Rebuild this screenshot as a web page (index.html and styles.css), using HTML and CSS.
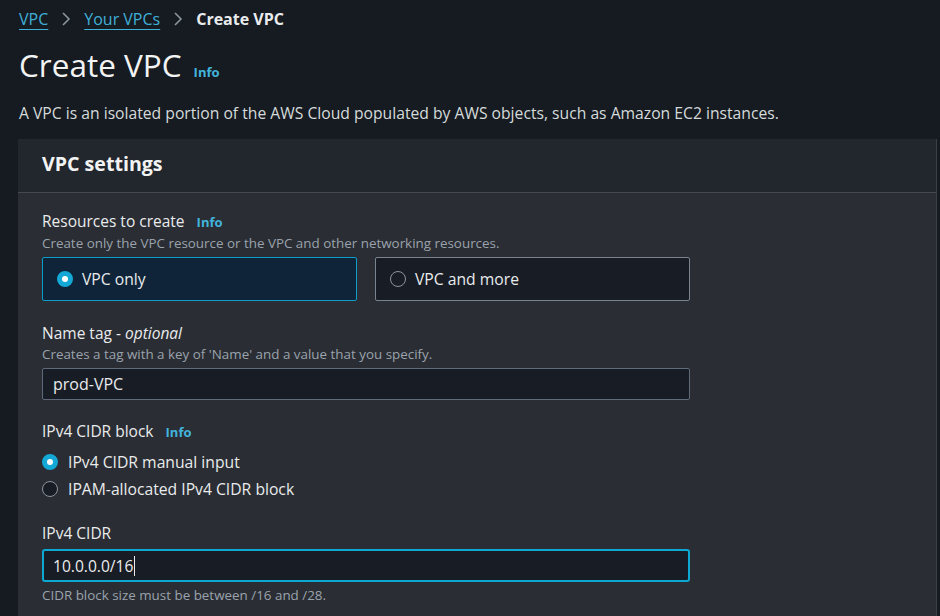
FILE: index.html
```html
<!DOCTYPE html>
<html>
<head>
<meta charset="utf-8">
<link rel="stylesheet" href="styles.css">
</head>
<body>
<div class="page">
  <nav class="crumbs">
    <a class="crumb-link">VPC</a>
    <svg class="chev" width="12" height="16" viewBox="0 0 12 16"><path d="M3 2 L9 8 L3 14" fill="none" stroke="#8d959e" stroke-width="1.6"/></svg>
    <a class="crumb-link">Your VPCs</a>
    <svg class="chev" width="12" height="16" viewBox="0 0 12 16"><path d="M3 2 L9 8 L3 14" fill="none" stroke="#8d959e" stroke-width="1.6"/></svg>
    <span class="crumb-current">Create VPC</span>
  </nav>
  <div class="title-row">
    <h1 class="title">Create VPC</h1>
    <span class="info">Info</span>
  </div>
  <p class="desc">A VPC is an isolated portion of the AWS Cloud populated by AWS objects, such as Amazon EC2 instances.</p>

  <section class="panel">
    <header class="panel-head">
      <h2 class="panel-title">VPC settings</h2>
    </header>
    <div class="panel-body">
      <div class="field">
        <div class="label">Resources to create <span class="info info-sm">Info</span></div>
        <div class="hint">Create only the VPC resource or the VPC and other networking resources.</div>
        <div class="tiles">
          <div class="tile tile-on"><span class="radio radio-on"></span><span>VPC only</span></div>
          <div class="tile"><span class="radio"></span><span>VPC and more</span></div>
        </div>
      </div>

      <div class="field field-name">
        <div class="label">Name tag - <em>optional</em></div>
        <div class="hint">Creates a tag with a key of 'Name' and a value that you specify.</div>
        <div class="input">prod-VPC</div>
      </div>

      <div class="field field-radios">
        <div class="label">IPv4 CIDR block <span class="info info-sm">Info</span></div>
        <div class="radios">
          <div class="radio-row"><span class="radio radio-on"></span><span>IPv4 CIDR manual input</span></div>
          <div class="radio-row"><span class="radio"></span><span>IPAM-allocated IPv4 CIDR block</span></div>
        </div>
      </div>

      <div class="field">
        <div class="label">IPv4 CIDR</div>
        <div class="input input-focus">10.0.0.0/16<span class="caret"></span></div>
        <div class="hint hint-below">CIDR block size must be between /16 and /28.</div>
      </div>
    </div>
  </section>
</div>
</body>
</html>
```
FILE: styles.css
```css
html, body {
  margin: 0;
  padding: 0;
  background: #161a21;
  height: 100%;
  overflow: hidden;
}
body {
  font-family: "Open Sans", "Noto Sans", sans-serif;
  color: #e9ebed;
}
.page {
  padding: 7px 3px 0 18px;
}
.crumbs {
  display: flex;
  align-items: center;
  gap: 10px;
  font-size: 16px;
  height: 24px;
  padding-left: 1px;
}
.crumb-link {
  color: #3fb0d8;
  text-decoration: underline;
  text-underline-offset: 4px;
  text-decoration-thickness: 1px;
}
.chev { margin: 0 2px; }
.crumb-current {
  font-weight: 700;
  color: #e9ebed;
}
.title-row {
  display: flex;
  align-items: baseline;
  gap: 12px;
  margin-top: 12px;
  padding-left: 1px;
}
.title {
  margin: 0;
  font-size: 31.5px;
  font-weight: 400;
  line-height: 44px;
  color: #f2f3f3;
}
.info {
  color: #42b4dc;
  font-weight: 700;
  font-size: 13px;
}
.desc {
  margin: 15px 0 0 1px;
  font-size: 15.7px;
  line-height: 22px;
  color: #d5dbdb;
}
.panel {
  margin-top: 15px;
  background: #2a2d33;
  border-right: 1px solid #3a3f47;
}
.panel-head {
  background: #22262d;
  height: 54px;
  box-sizing: border-box;
  padding-bottom: 4px;
  border-bottom: 1px solid #434951;
  display: flex;
  align-items: center;
  padding-left: 24px;
}
.panel-title {
  margin: 0;
  font-size: 19.6px;
  font-weight: 700;
  color: #f2f3f3;
}
.panel-body {
  padding: 17px 24px 20px 24px;
}
.field {
  margin-bottom: 21px;
  width: 648px;
}
.field-name { margin-bottom: 20px; }
.field-radios { margin-bottom: 22px; }
.label {
  font-size: 15.5px;
  line-height: 22px;
  color: #e9ebed;
}
.label em { font-style: italic; }
.info-sm { margin-left: 8px; }
.hint {
  font-size: 13.4px;
  line-height: 20px;
  color: #9aa3ad;
}
.hint-below { margin-top: 3px; }
.tiles {
  display: flex;
  gap: 18px;
  margin-top: 4px;
}
.tile {
  flex: 1;
  height: 42px;
  border: 1px solid #7a848f;
  border-radius: 2px;
  background: #181c24;
  display: flex;
  align-items: center;
  gap: 9px;
  padding-left: 14px;
  font-size: 15.7px;
  color: #e9ebed;
}
.tile-on {
  background: #0f2438;
  border-color: #0c9ec8;
}
.radio {
  width: 14px;
  height: 14px;
  border: 1.5px solid #8d959e;
  border-radius: 50%;
  box-sizing: content-box;
  background: transparent;
  flex: none;
}
.radio-on {
  width: 6px;
  height: 6px;
  border: 5.5px solid #13a8d6;
  background: #ffffff;
}
.input {
  margin-top: 4px;
  height: 30px;
  border: 1px solid #5f6b7a;
  border-radius: 2px;
  background: #181c24;
  display: flex;
  align-items: center;
  padding-left: 10px;
  font-size: 16px;
  color: #e9ebed;
}
.input-focus {
  height: 29px;
  border: 2px solid #0ca8d2;
  border-radius: 3px;
  margin-top: 5px;
  padding-left: 9px;
  font-size: 15.6px;
}
.caret {
  display: inline-block;
  width: 1px;
  height: 20px;
  background: #e9ebed;
  margin-left: 1px;
}
.radios {
  margin-top: 8px;
  display: flex;
  flex-direction: column;
  gap: 5px;
}
.radio-row {
  display: flex;
  align-items: center;
  gap: 10px;
  font-size: 15.7px;
  height: 22px;
  color: #e9ebed;
}
.radio-row .radio { background: #181c24; }
.radio-row .radio-on { background: #ffffff; }
```
